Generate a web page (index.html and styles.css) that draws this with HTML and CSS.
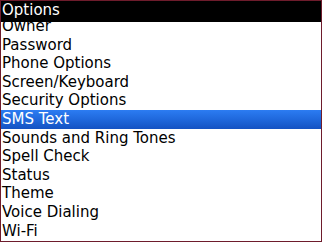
FILE: index.html
```html
<!DOCTYPE html>
<html>
<head>
<meta charset="utf-8">
<link rel="stylesheet" href="styles.css">
</head>
<body>
<div class="screen">
  <div class="title">Options</div>
  <div class="viewport">
    <ul class="list">
      <li class="item">Owner</li>
      <li class="item">Password</li>
      <li class="item">Phone Options</li>
      <li class="item">Screen/Keyboard</li>
      <li class="item">Security Options</li>
      <li class="item selected">SMS Text</li>
      <li class="item">Sounds and Ring Tones</li>
      <li class="item">Spell Check</li>
      <li class="item">Status</li>
      <li class="item">Theme</li>
      <li class="item">Voice Dialing</li>
      <li class="item">Wi-Fi</li>
    </ul>
  </div>
</div>
</body>
</html>
```

FILE: styles.css
```css
html, body {
  margin: 0;
  padding: 0;
  background: #ffffff;
}

.screen {
  box-sizing: border-box;
  width: 322px;
  height: 242px;
  border: 1px solid #6e1c2c;
  display: flex;
  flex-direction: column;
  overflow: hidden;
  font-family: "DejaVu Sans", sans-serif;
  font-size: 15px;
  background: #ffffff;
}

.title {
  flex: none;
  height: 18px;
  line-height: 18px;
  padding: 0 0 3px 1px;
  background: #000000;
  color: #ffffff;
  position: relative;
  z-index: 1;
}

.viewport {
  flex: 1;
  overflow: hidden;
}

.list {
  list-style: none;
  margin: -5px 0 0 0;
  padding: 0;
}

.item {
  height: 18.6px;
  line-height: 18.6px;
  padding-left: 1px;
  color: #000000;
  white-space: nowrap;
}

.selected {
  background: linear-gradient(to bottom, #2c7cf2 0%, #1f68dc 50%, #1452c2 100%);
  color: #ffffff;
}
```
